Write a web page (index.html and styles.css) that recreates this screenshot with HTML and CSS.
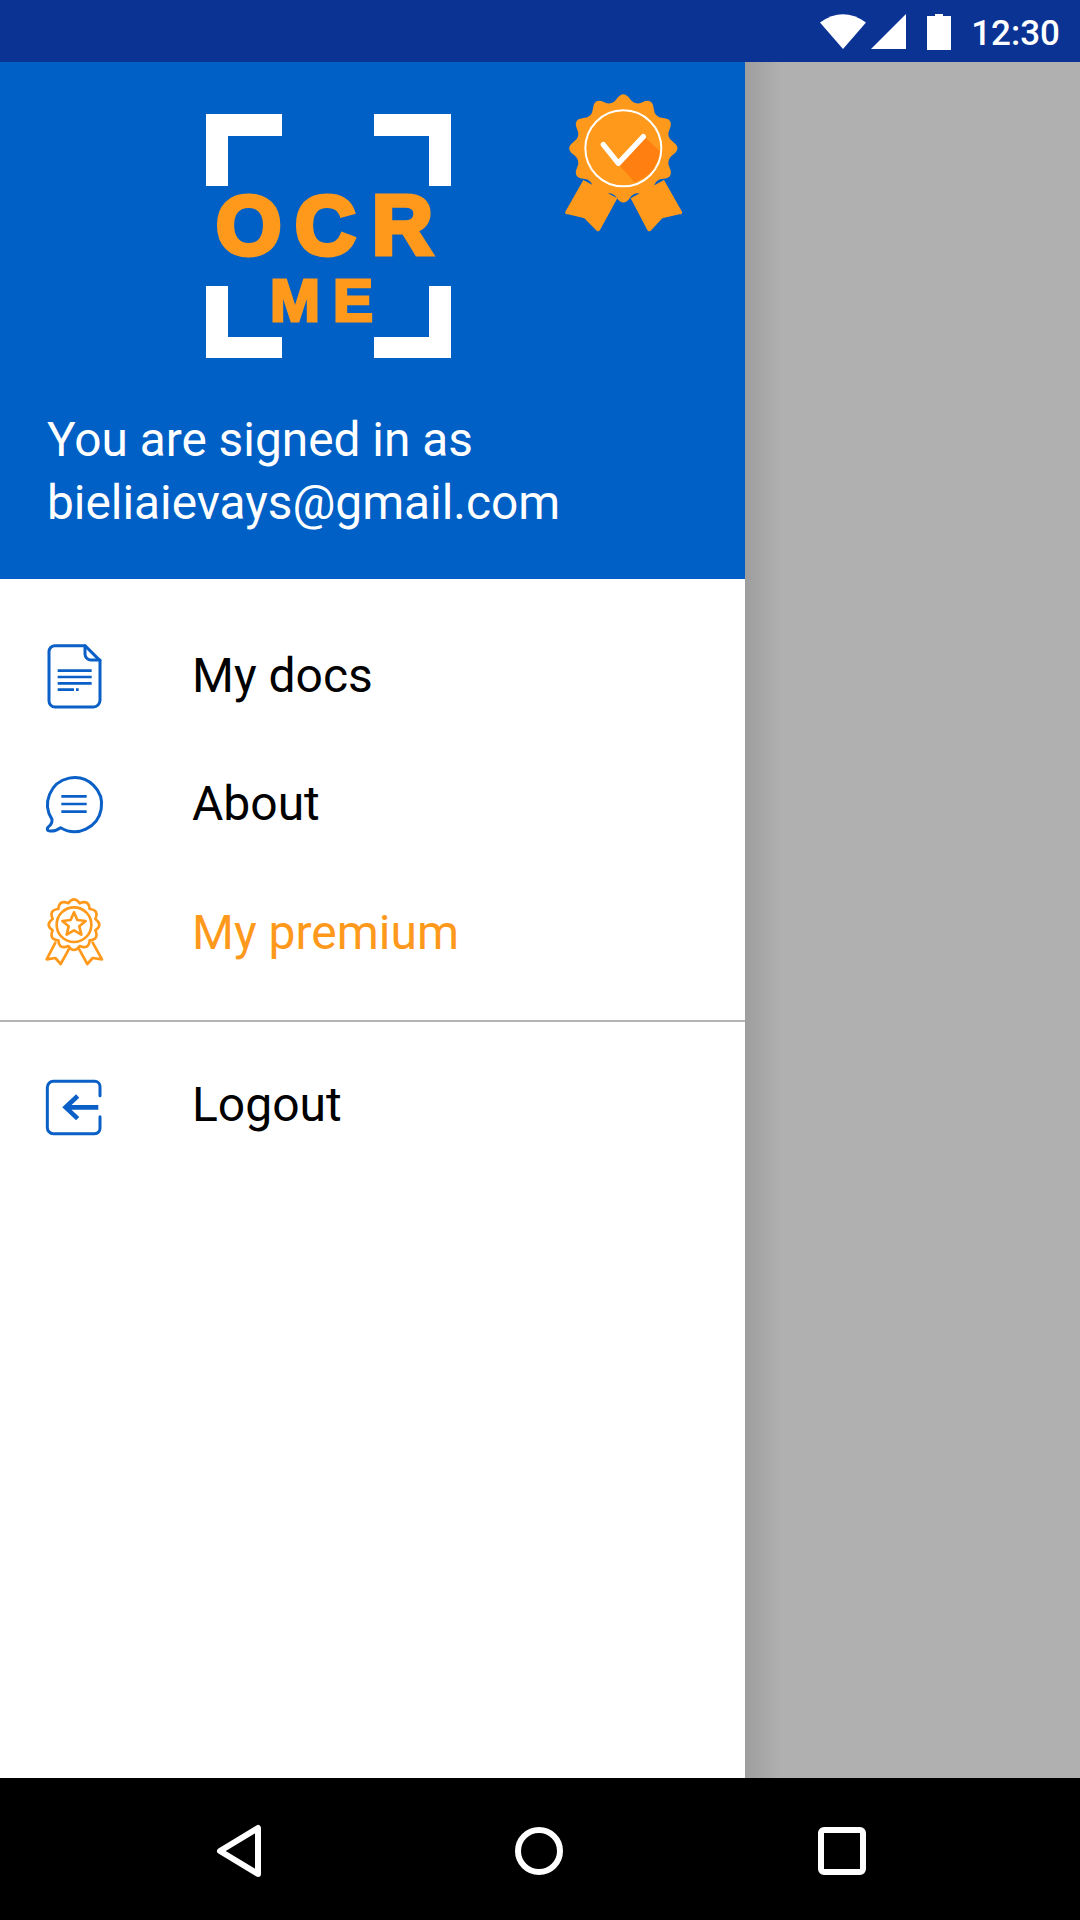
FILE: index.html
```html
<!DOCTYPE html>
<html lang="en">
<head>
    <meta charset="UTF-8">
    <meta name="viewport" content="width=device-width, initial-scale=1.0">
    <title>OCR ME - Menu</title>
    <link rel="stylesheet" href="styles.css">
</head>
<body>

<div class="status-bar">
    <svg class="status-wifi" viewBox="0 0 46 36" width="46" height="36">
        <path d="M0 8.500 Q23 -8 46 8.500 L23 35 Z"/>
    </svg>
    <svg class="status-cell" viewBox="0 0 35 35" width="35" height="35">
        <path d="M35 0 V35 H0 Z"/>
    </svg>
    <svg class="status-battery" viewBox="0 0 24 36" width="24" height="36">
        <path d="M8 0 H16 V2 H24 V36 H0 V2 H8 Z"/>
    </svg>
    <span class="status-time">12:30</span>
</div>

<div class="main">
    <div class="drawer">
        <div class="drawer-header">
            <div class="logo-row">
                <svg class="logo" viewBox="0 0 300 290" width="300" height="290">
                    <path class="logo-frame" d="M26 24 H102 V46 H48 V96 H26 Z"/>
                    <path class="logo-frame" d="M194 24 H271 V96 H249 V46 H194 Z"/>
                    <path class="logo-frame" d="M26 196 H48 V247 H102 V268 H26 Z"/>
                    <path class="logo-frame" d="M249 196 H271 V268 H194 V247 H249 Z"/>
                    <text class="logo-ocr" x="36 115 192" y="164">OCR</text>
                    <text class="logo-me" x="90 153" y="231">ME</text>
                </svg>
                <svg class="medal" viewBox="0 0 480 480" width="160" height="160">
                    <path class="medal-fill" d="M130 300 L76 395 Q74 404 84 403 L133 415 L170 452 Q176 456 180 450 L232 355 Z"/>
                    <path class="medal-fill" d="M372 300 L426 395 Q428 404 418 403 L367 415 L332 452 Q326 456 322 450 L272 355 Z"/>
                    <path class="medal-fill" d="M230.4 56.3 Q250 29 269.6 56.3 Q284.2 77.5 307.4 66.4 Q338 52.6 341.3 86 Q343.3 111.7 369 113.7 Q402.4 117 388.6 147.6 Q377.5 170.8 398.7 185.4 Q426 205 398.7 224.6 Q377.5 239.2 388.6 262.4 Q402.4 293 369 296.3 Q343.3 298.3 341.3 324 Q338 357.4 307.4 343.6 Q284.2 332.5 269.6 353.7 Q250 381 230.4 353.7 Q215.8 332.5 192.6 343.6 Q162 357.4 158.7 324 Q156.7 298.3 131 296.3 Q97.6 293 111.4 262.4 Q122.5 239.2 101.3 224.6 Q74 205 101.3 185.4 Q122.5 170.8 111.4 147.6 Q97.6 117 131 113.7 Q156.7 111.7 158.7 86 Q162 52.6 192.6 66.4 Q215.8 77.5 230.4 56.3 Z"/>
                    <path class="medal-shade" d="M238 256 L313 170 L360 214 Q350 285 283 306 Z"/>
                    <circle class="medal-ring" cx="250" cy="205" r="114"/>
                    <path class="medal-check" d="M190 194 L235 250 L310 170"/>
                </svg>
            </div>
            <div class="signed-in">You are signed in as<br>bieliaievays@gmail.com</div>
        </div>

        <div class="menu">
            <div class="menu-item">
                <svg class="menu-icon" viewBox="0 0 270 270" width="90" height="90">
                    <path d="M165 47 H75 a18 18 0 0 0 -18 18 V213 a18 18 0 0 0 18 18 H190 a20 20 0 0 0 20 -20 V92 Z"/>
                    <path d="M165 47 V72 a18 18 0 0 0 18 18 H210"/>
                    <path class="thin" d="M83 122 H185 M83 141 H185 M83 160 H185 M83 179 H132 M138 179 H146"/>
                </svg>
                <span>My docs</span>
            </div>
            <div class="menu-item">
                <svg class="menu-icon" viewBox="0 0 270 270" width="90" height="90">
                    <path d="M66 181 A81 81 0 1 1 92 206 Q72 220 55 215 Q48 210 56 203 Q67 194 66 181 Z"/>
                    <path class="thin" d="M94 112 H170 M94 135 H170 M94 158 H170"/>
                </svg>
                <span>About</span>
            </div>
            <div class="menu-item premium">
                <svg class="menu-icon" viewBox="0 0 270 270" width="90" height="90">
                    <path d="M149 58 Q176 46 179 75 Q208 78 196 105 Q220 122 196 139 Q208 166 179 169 Q176 198 149 186 Q132 210 115 186 Q88 198 85 169 Q56 166 68 139 Q44 122 68 105 Q56 78 85 75 Q88 46 115 58 Q132 34 149 58 Z"/>
                    <circle cx="132" cy="122" r="52"/>
                    <path d="M132 85 L142 108 L167 111 L148 127 L154 152 L132 139 L110 152 L116 127 L97 111 L122 108 Z"/>
                    <path d="M76 176 L50 226 L76 222 L92 240 L118 193"/>
                    <path d="M188 176 L216 226 L188 222 L172 240 L146 193"/>
                </svg>
                <span>My premium</span>
            </div>
        </div>

        <div class="menu-divider"></div>

        <div class="menu menu-bottom">
            <div class="menu-item">
                <svg class="menu-icon" viewBox="0 0 270 270" width="90" height="90">
                    <path d="M210 92 V65 a16 16 0 0 0 -16 -16 H70 a18 18 0 0 0 -18 18 V188 a18 18 0 0 0 18 18 H194 a16 16 0 0 0 16 -16 V155"/>
                    <path class="arrow" d="M205 127 H108 M143 93 L107 127 L143 161"/>
                </svg>
                <span>Logout</span>
            </div>
        </div>
    </div>
    <div class="scrim"></div>
</div>

<div class="nav-bar">
    <svg viewBox="0 0 60 60" width="60" height="60">
        <path class="nav-icon" d="M49 7 V53 L11 30 Z"/>
    </svg>
    <svg viewBox="0 0 60 60" width="60" height="60">
        <circle class="nav-icon" cx="30" cy="30" r="21"/>
    </svg>
    <svg viewBox="0 0 60 60" width="60" height="60">
        <rect class="nav-icon" x="9" y="9" width="42" height="42" rx="3"/>
    </svg>
</div>

</body>
</html>
```

FILE: styles.css
```css
* {
    box-sizing: border-box;
}
body {
    margin: 0;
    width: 1080px;
    height: 1920px;
    display: flex;
    flex-direction: column;
    font-family: Roboto, sans-serif;
    overflow: hidden;
}
.status-bar {
    height: 62px;
    background-color: #0b3394;
    display: flex;
    align-items: center;
    justify-content: flex-end;
    padding-right: 20px;
    padding-top: 4px;
}
.status-bar svg {
    fill: white;
}
.status-wifi {
    margin-right: 5px;
    margin-top: -3px;
}
.status-cell {
    margin-right: 21px;
    margin-top: -3px;
}
.status-battery {
    margin-right: 20px;
    margin-top: -3px;
}
.status-time {
    color: white;
    font-size: 35px;
    font-weight: 500;
}
.main {
    flex: 1;
    display: flex;
}
.drawer {
    width: 745px;
    background-color: white;
}
.scrim {
    flex: 1;
    background: linear-gradient(to right, #9e9e9e, #b0b0b0 36px);
}
.drawer-header {
    height: 517px;
    background-color: #0060c6;
    padding-top: 28px;
}
.logo-row {
    display: flex;
    align-items: flex-start;
    padding-left: 180px;
}
.logo-frame {
    fill: white;
}
.logo-ocr {
    font-family: "Liberation Sans", Arial, sans-serif;
    font-weight: bold;
    font-size: 84px;
    fill: #ff991b;
    stroke: #ff991b;
    stroke-width: 5px;
}
.logo-me {
    font-family: "Liberation Sans", Arial, sans-serif;
    font-weight: bold;
    font-size: 60px;
    fill: #ff991b;
    stroke: #ff991b;
    stroke-width: 3px;
}
.medal {
    margin-left: 60px;
    margin-top: -10px;
}
.medal-fill {
    fill: #ff991b;
}
.medal-shade {
    fill: #ff7f11;
}
.medal-ring {
    fill: none;
    stroke: white;
    stroke-width: 6;
}
.medal-check {
    fill: none;
    stroke: white;
    stroke-width: 16;
    stroke-linecap: round;
    stroke-linejoin: round;
}
.signed-in {
    color: white;
    font-size: 47.8px;
    line-height: 63px;
    padding-left: 47px;
    margin-top: 29px;
}
.menu {
    padding-top: 32px;
    padding-bottom: 23px;
}
.menu-bottom {
    padding-top: 19px;
    padding-bottom: 0;
}
.menu-item {
    height: 128.5px;
    display: flex;
    align-items: center;
    padding-left: 30px;
    font-size: 48px;
    color: black;
}
.menu-item span {
    margin-left: 72px;
}
.menu-item.premium {
    color: #ff991b;
}
.menu-icon {
    fill: none;
    stroke: #0a60c6;
    stroke-width: 9;
    stroke-linejoin: round;
    stroke-linecap: round;
}
.premium .menu-icon {
    stroke: #ff991b;
    stroke-width: 8;
    margin-top: -6px;
}
.menu-bottom .menu-icon {
    margin-top: 10px;
}
.menu-icon .thin {
    stroke-width: 8;
    stroke-linecap: butt;
}
.menu-icon .arrow {
    stroke-width: 14;
    stroke-linecap: butt;
    stroke-linejoin: miter;
}
.menu-divider {
    height: 2px;
    background-color: #b4b4b4;
}
.nav-bar {
    height: 142px;
    background-color: black;
    display: flex;
}
.nav-bar svg:nth-child(1) {
    margin: 43px 0 0 209px;
}
.nav-bar svg:nth-child(2) {
    margin: 43px 0 0 240px;
}
.nav-bar svg:nth-child(3) {
    margin: 43px 0 0 243px;
}
.nav-icon {
    fill: none;
    stroke: white;
    stroke-width: 6;
    stroke-linejoin: round;
}
```
